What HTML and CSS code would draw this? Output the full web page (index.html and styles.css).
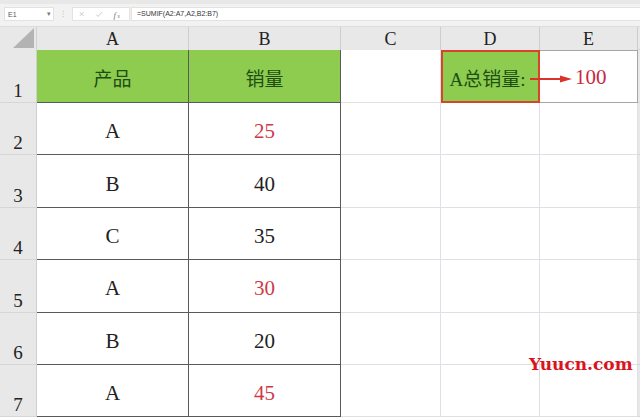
FILE: index.html
```html
<!DOCTYPE html>
<html lang="zh">
<head>
<meta charset="utf-8">
<link rel="stylesheet" href="styles.css">
</head>
<body>
<div class="app">
  <div class="toolbar">
    <div class="namebox"><span>E1</span><span class="drop">▾</span></div>
    <div class="sep">⁝</div>
    <div class="btns">
      <svg width="58" height="13" viewBox="0 0 58 13">
        <path d="M7 4 L11 8 M11 4 L7 8" stroke="#c9c9c9" stroke-width="1" fill="none"/>
        <path d="M24 6.5 L26 8.5 L30 4" stroke="#c9c9c9" stroke-width="1" fill="none"/>
        <text x="42" y="10" font-family="Liberation Serif, serif" font-style="italic" font-size="9" fill="#777">f</text>
        <text x="46" y="10" font-family="Liberation Sans, sans-serif" font-size="5" fill="#777">x</text>
      </svg>
    </div>
    <div class="formula">=SUMIF(A2:A7,A2,B2:B7)</div>
  </div>
  <div class="sheet">
    <div class="corner"><div class="tri"></div></div>
    <div class="colh">A</div>
    <div class="colh">B</div>
    <div class="colh">C</div>
    <div class="colh">D</div>
    <div class="colh">E</div>
    <div class="colh edge"></div>

    <div class="rowh r1">1</div>
    <div class="cell tb head">产品</div>
    <div class="cell tb head">销量</div>
    <div class="cell grid"></div>
    <div class="cell dcell">A总销量:</div>
    <div class="cell ecell">100</div>
    <div class="cell edge"></div>

    <div class="rowh">2</div>
    <div class="cell tb">A</div>
    <div class="cell tb red">25</div>
    <div class="cell grid"></div>
    <div class="cell grid"></div>
    <div class="cell grid"></div>
    <div class="cell edge"></div>

    <div class="rowh">3</div>
    <div class="cell tb">B</div>
    <div class="cell tb">40</div>
    <div class="cell grid"></div>
    <div class="cell grid"></div>
    <div class="cell grid"></div>
    <div class="cell edge"></div>

    <div class="rowh">4</div>
    <div class="cell tb">C</div>
    <div class="cell tb">35</div>
    <div class="cell grid"></div>
    <div class="cell grid"></div>
    <div class="cell grid"></div>
    <div class="cell edge"></div>

    <div class="rowh">5</div>
    <div class="cell tb">A</div>
    <div class="cell tb red">30</div>
    <div class="cell grid"></div>
    <div class="cell grid"></div>
    <div class="cell grid"></div>
    <div class="cell edge"></div>

    <div class="rowh">6</div>
    <div class="cell tb">B</div>
    <div class="cell tb">20</div>
    <div class="cell grid"></div>
    <div class="cell grid"></div>
    <div class="cell grid"></div>
    <div class="cell edge"></div>

    <div class="rowh">7</div>
    <div class="cell tb">A</div>
    <div class="cell tb red">45</div>
    <div class="cell grid"></div>
    <div class="cell grid"></div>
    <div class="cell grid"></div>
    <div class="cell edge"></div>

    <svg class="arrow" width="44" height="10" viewBox="0 0 44 10">
      <path d="M0 5 L33 5" stroke="#d9342b" stroke-width="2"/>
      <path d="M30 1.5 L42 5 L30 8.5 Z" fill="#d9342b"/>
    </svg>
    <div class="watermark">Yuucn.com</div>
  </div>
</div>
</body>
</html>
```

FILE: styles.css
```css
* { box-sizing: border-box; }
html, body { margin: 0; padding: 0; }
body {
  width: 640px;
  height: 419px;
  overflow: hidden;
  background: #ffffff;
  font-family: "Liberation Serif", "Noto Sans CJK SC", serif;
}
.app { width: 640px; height: 419px; overflow: hidden; }

.toolbar {
  height: 27px;
  background: #f2f2f2;
  border-top: 4px solid #e8e8e8;
  display: flex;
  align-items: flex-start;
  padding: 3px 0 0 4px;
  border-bottom: 1px solid #dcdcdc;
}
.namebox {
  width: 50px;
  height: 14px;
  background: #fff;
  border: 1px solid #e2e2e2;
  display: flex;
  justify-content: space-between;
  align-items: center;
  padding: 0 2px 0 3px;
  font-family: "Liberation Sans", sans-serif;
  font-size: 7px;
  color: #555;
}
.drop { font-size: 7px; color: #777; }
.sep {
  width: 18px;
  text-align: center;
  font-size: 9px;
  line-height: 14px;
  color: #c8c8c8;
  font-family: "Liberation Sans", sans-serif;
}
.btns {
  width: 58px;
  height: 14px;
  background: #fff;
  border: 1px solid #e2e2e2;
  display: flex;
  align-items: center;
  margin-right: 1px;
}
.formula {
  flex: 1;
  height: 14px;
  background: #fff;
  border: 1px solid #e2e2e2;
  border-right: none;
  font-family: "Liberation Sans", sans-serif;
  font-size: 7px;
  line-height: 12px;
  color: #333;
  padding-left: 5px;
}

.sheet {
  position: relative;
  display: grid;
  grid-template-columns: 37px 152px 152px 100px 99px 98px 2px;
  grid-template-rows: 23px 53px repeat(6, 52.4px);
}
.corner {
  background: #e8e8e8;
  border-right: 1px solid #d0d0d0;
  position: relative;
}
.tri {
  position: absolute;
  right: 2px;
  bottom: 2px;
  width: 0;
  height: 0;
  border-left: 21px solid transparent;
  border-bottom: 20px solid #b3b3b3;
}
.colh {
  background: #e8e8e8;
  border-right: 1px solid #cdcdcd;
  text-align: center;
  font-size: 18px;
  line-height: 24px;
  color: #222;
}
.colh.edge { border-right: none; background: #e8e8e8; }
.rowh {
  background: #e8e8e8;
  border-bottom: 1px solid #d6d6d6;
  border-right: 1px solid #d0d0d0;
  display: flex;
  align-items: flex-end;
  justify-content: center;
  font-size: 19px;
  line-height: 19px;
  padding-bottom: 2px;
  color: #222;
}
.cell {
  display: flex;
  align-items: center;
  justify-content: center;
  font-size: 21px;
  color: #222;
  padding-top: 6px;
}
.tb {
  border-right: 1px solid #5a5a5a;
  border-bottom: 1px solid #5a5a5a;
}
.head {
  background: #8dcc4f;
  color: #1e4e12;
  font-size: 19px;
  padding-top: 2px;
}
.red { color: #cf3a46; }
.grid {
  border-right: 1px solid #e1dee6;
  border-bottom: 1px solid #e1dee6;
}
.dcell {
  background: #8dcc4f;
  border: 2px solid #d8432c;
  color: #1e4e12;
  font-size: 19px;
  padding-top: 2px;
  padding-right: 6px;
}
.ecell {
  border: 1px solid #a6a6a6;
  border-left: none;
  color: #c9283c;
  justify-content: flex-start;
  padding-left: 35px;
  padding-top: 2px;
}
.edge {
  background: #e8e8e8;
  border-bottom: 1px solid #d6d6d6;
}
.arrow {
  position: absolute;
  left: 530px;
  top: 47px;
}
.watermark {
  position: absolute;
  left: 529px;
  top: 327px;
  font-family: "DejaVu Serif", "Liberation Serif", serif;
  font-weight: bold;
  font-size: 17px;
  color: #d8141c;
}
```
